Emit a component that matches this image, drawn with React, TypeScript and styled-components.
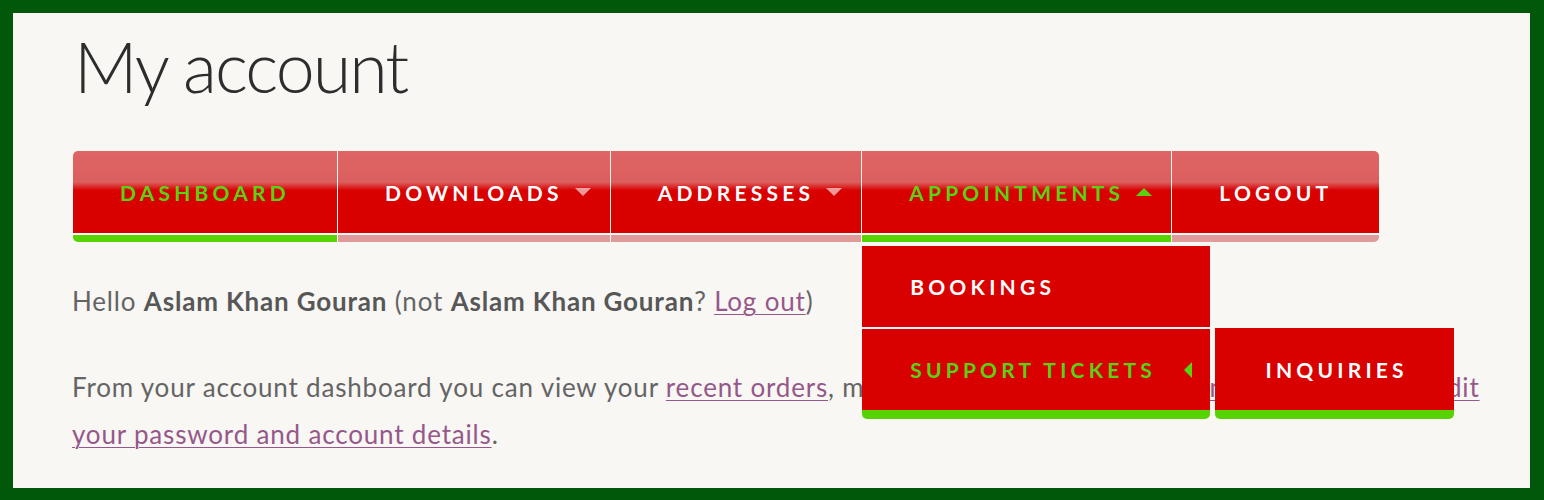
import styled, { createGlobalStyle } from 'styled-components';

const GlobalStyle = createGlobalStyle`
  html, body { margin: 0; padding: 0; }
  body { background: #02580a; }
  * { box-sizing: border-box; }
`;

interface NavItem {
    label: string;
    active?: boolean;
    arrow?: 'down' | 'up';
}

const navItems: NavItem[] = [
    { label: 'Dashboard', active: true },
    { label: 'Downloads', arrow: 'down' },
    { label: 'Addresses', arrow: 'down' },
    { label: 'Appointments', active: true, arrow: 'up' },
    { label: 'Logout' },
];

export default function App() {
    return (
        <>
            <GlobalStyle />
            <Frame>
                <Title>My account</Title>
                <Nav>
                    {navItems.map((item, i) => (
                        <Tab key={item.label}>
                            <TabLabel $active={item.active}>
                                {item.label}
                                {item.arrow && <Caret $dir={item.arrow} $active={item.active} />}
                            </TabLabel>
                            <Stripe $active={item.active} />
                            {i === 3 && (
                                <Dropdown>
                                    <DropItem>
                                        <DropLabel>Bookings</DropLabel>
                                    </DropItem>
                                    <DropItem $last>
                                        <DropLabel $active>
                                            Support Tickets
                                            <SideCaret />
                                        </DropLabel>
                                        <SubMenu>
                                            <DropLabel>Inquiries</DropLabel>
                                        </SubMenu>
                                    </DropItem>
                                </Dropdown>
                            )}
                        </Tab>
                    ))}
                </Nav>
                <Para>
                    Hello <b>Aslam Khan Gouran</b> (not <b>Aslam Khan Gouran</b>? <Link href="#">Log out</Link>)
                </Para>
                <Para>
                    From your account dashboard you can view your <Link href="#">recent orders</Link>, manage your{' '}
                    <Link href="#">shipping and billing addresses</Link>, and{' '}
                    <Link href="#">edit your password and account details</Link>.
                </Para>
            </Frame>
        </>
    );
}

const Frame = styled.div`
  height: 500px;
  border-style: solid;
  border-color: #02580a;
  border-width: 13px 14px 12px 13px;
  background: #f8f7f4;
  padding: 18px 45px 0 59px;
  overflow: hidden;
  font-family: Lato, "Liberation Sans", sans-serif;
`;

const Title = styled.h1`
  margin: 0;
  font-family: Lato, sans-serif;
  font-weight: 300;
  font-size: 70px;
  line-height: 70px;
  letter-spacing: -2px;
  color: #2d2d2d;
  padding-left: 2px;
`;

const Nav = styled.ul`
  list-style: none;
  margin: 50px 0 0 1px;
  padding: 0;
  display: flex;
  gap: 1px;
  position: relative;
  z-index: 2;
`;

const TabLabel = styled.a<{ $active?: boolean }>`
  position: relative;
  height: 82px;
  display: flex;
  align-items: center;
  justify-content: center;
  padding: 0 47px;
  background: linear-gradient(to bottom, #de6565 0%, #dc5f5f 38%, #d90000 48%, #d90000 100%);
  color: ${(p) => (p.$active ? '#5ad214' : '#ffffff')};
  font-weight: 700;
  font-size: 21px;
  letter-spacing: 4.2px;
  text-transform: uppercase;
  white-space: nowrap;
  cursor: pointer;
`;

const Stripe = styled.span<{ $active?: boolean }>`
  display: block;
  height: 7px;
  margin-top: 2px;
  background: ${(p) => (p.$active ? '#56d300' : '#e09a9a')};
`;

const Tab = styled.li`
  position: relative;
  display: flex;
  flex-direction: column;

  &:first-child ${TabLabel} { border-top-left-radius: 5px; }
  &:first-child ${Stripe} { border-bottom-left-radius: 5px; }
  &:last-child ${TabLabel} { border-top-right-radius: 5px; }
  &:last-child ${Stripe} { border-bottom-right-radius: 5px; }
`;

const Caret = styled.span<{ $dir: 'down' | 'up'; $active?: boolean }>`
  position: absolute;
  right: 19px;
  top: 50%;
  margin-top: -4px;
  width: 0;
  height: 0;
  border-left: 8px solid transparent;
  border-right: 8px solid transparent;
  ${(p) =>
        p.$dir === 'down'
            ? `border-top: 8px solid rgba(255, 255, 255, 0.6);`
            : `border-bottom: 8px solid ${p.$active ? '#5ad214' : '#fff'};`}
`;

const Dropdown = styled.ul`
  position: absolute;
  top: calc(100% + 4px);
  left: 0;
  width: 348px;
  margin: 0;
  padding: 0;
  list-style: none;
  display: flex;
  flex-direction: column;
  gap: 2px;
`;

const DropItem = styled.li<{ $last?: boolean }>`
  position: relative;
  background: #d90000;
  ${(p) =>
        p.$last &&
        `border-bottom: 9px solid #56d300;
     border-radius: 0 0 5px 5px;`}
`;

const DropLabel = styled.a<{ $active?: boolean }>`
  position: relative;
  display: flex;
  align-items: center;
  height: 81px;
  padding: 0 47px 0 48px;
  background: #d90000;
  color: ${(p) => (p.$active ? '#5ad214' : '#ffffff')};
  font-weight: 700;
  font-size: 21px;
  letter-spacing: 4.2px;
  text-transform: uppercase;
  white-space: nowrap;
  cursor: pointer;
`;

const SideCaret = styled.span`
  position: absolute;
  right: 18px;
  top: 50%;
  margin-top: -8px;
  width: 0;
  height: 0;
  border-top: 8px solid transparent;
  border-bottom: 8px solid transparent;
  border-right: 8px solid #5ad214;
`;

const SubMenu = styled.div`
  position: absolute;
  left: calc(100% + 5px);
  top: -1px;
  width: 239px;
  background: #d90000;
  border-bottom: 9px solid #56d300;
  border-radius: 0 0 5px 5px;

  ${DropLabel} {
    justify-content: center;
    padding: 0 0 0 4px;
    height: 82px;
  }
`;

const Para = styled.p`
  margin: 36px 0 0 0;
  font-size: 26px;
  line-height: 47px;
  letter-spacing: 0.82px;
  color: #646464;

  & + & { margin-top: 39px; }

  b { font-weight: 700; color: #575757; }
`;

const Link = styled.a`
  color: #96588a;
  text-decoration: underline;
  text-underline-offset: 3px;
  text-decoration-thickness: 1px;
`;
